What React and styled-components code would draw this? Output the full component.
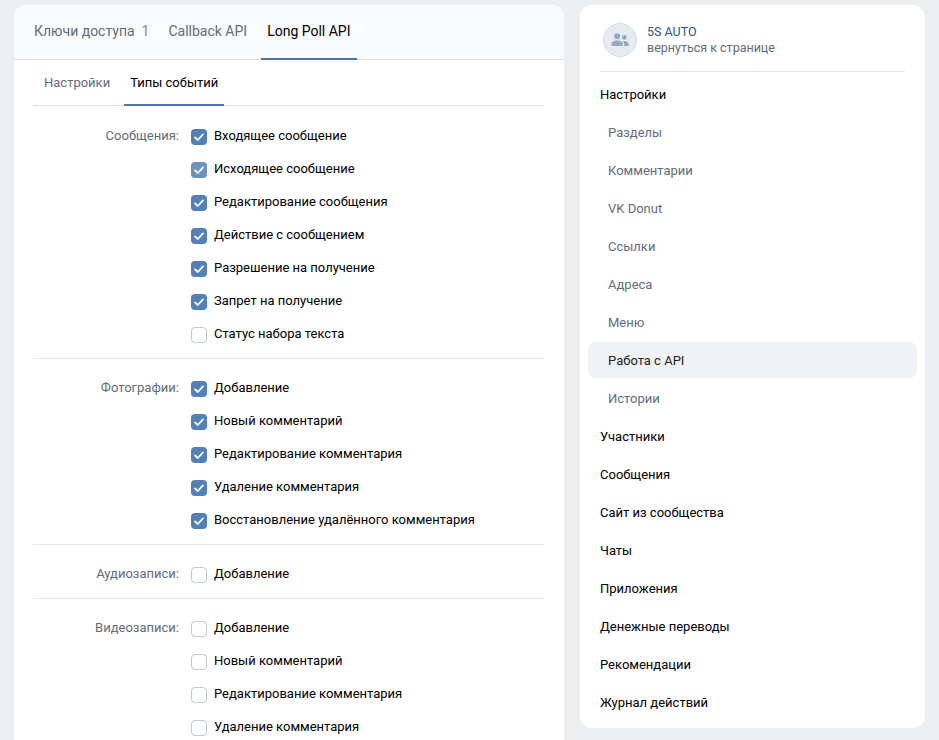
import styled, { createGlobalStyle } from "styled-components";

const GlobalStyle = createGlobalStyle`
  html, body {
    margin: 0;
    height: 740px;
    overflow: hidden;
    background-color: #edeef0;
    font-family: Roboto, "Liberation Sans", sans-serif;
    font-size: 13px;
    color: #000;
  }
`;

const Page = styled.div`
  display: flex;
  align-items: flex-start;
  gap: 16px;
  padding: 5px 14px 0;
`;

const MainCard = styled.main`
  width: 550px;
  background-color: #fff;
  border-radius: 12px 12px 0 0;
  overflow: hidden;
`;

const TopTabs = styled.div`
  display: flex;
  height: 54px;
  padding-left: 14px;
  background-color: #fafbfc;
  border-bottom: 1px solid #dce1e6;
`;

const TopTab = styled.div`
  height: 55px;
  box-sizing: border-box;
  padding: 0 6px 2px;
  margin-right: ${(p) => p.$gap || 0}px;
  display: flex;
  align-items: center;
  font-size: 14px;
  color: ${(p) => (p.$active ? "#000" : "#626d7a")};
  border-bottom: 2px solid ${(p) => (p.$active ? "#4a76a8" : "transparent")};

  span {
    margin-left: 7px;
    color: #828a99;
  }
`;

const Content = styled.div`
  padding: 0 20px 0 19px;
`;

const SubTabs = styled.div`
  display: flex;
  height: 45px;
  padding-left: 4px;
  border-bottom: 1px solid #dce1e6;
`;

const SubTab = styled.div`
  height: 46px;
  box-sizing: border-box;
  padding: 0 ${(p) => (p.$active ? 6 : 7)}px;
  display: flex;
  align-items: center;
  margin-right: ${(p) => p.$gap || 0}px;
  color: ${(p) => (p.$active ? "#000" : "#626d7a")};
  border-bottom: 2px solid ${(p) => (p.$active ? "#4a76a8" : "transparent")};
`;

const Group = styled.section`
  display: grid;
  grid-template-columns: 146px 1fr;
  column-gap: 12px;
  padding: 12px 0 8px;
  border-bottom: 1px solid #e7e8ec;

  &:nth-child(2) {
    padding-top: 13px;
  }

  &:last-child {
    border-bottom: 0;
  }
`;

const GroupLabel = styled.div`
  height: 33px;
  line-height: 33px;
  text-align: right;
  color: #626d7a;
`;

const Rows = styled.div`
  display: flex;
  flex-direction: column;
`;

const Row = styled.label`
  height: 33px;
  display: flex;
  align-items: center;
  gap: 7px;
`;

const Box = styled.span`
  width: 16px;
  height: 16px;
  box-sizing: border-box;
  border-radius: 4px;
  display: flex;
  align-items: center;
  justify-content: center;
  margin-top: 2px;
  background-color: ${(p) => (p.$checked ? (p.$light ? "#6a91bf" : "#5181b8") : "#fff")};
  border: ${(p) => (p.$checked ? "0" : "1.5px solid #c1c9d1")};
`;

const Sidebar = styled.aside`
  width: 345px;
  box-sizing: border-box;
  height: 723px;
  background-color: #fff;
  border-radius: 12px;
  padding: 0 8px;
`;

const GroupHead = styled.div`
  margin: 0 12px;
  height: 67px;
  box-sizing: border-box;
  padding: 18px 0 0 3px;
  display: flex;
  gap: 10px;
  border-bottom: 1px solid #e7e8ec;
`;

const Avatar = styled.div`
  width: 34px;
  height: 34px;
  box-sizing: border-box;
  border-radius: 50%;
  background-color: #e5ebf1;
  border: 1px solid #d7dde4;
  display: flex;
  align-items: center;
  justify-content: center;
  flex-shrink: 0;
`;

const GroupText = styled.div`
  padding-top: 1px;
  line-height: 16px;
  font-size: 12.5px;
`;

const GroupName = styled.div`
  color: #2a5885;
`;

const GroupBack = styled.div`
  color: #626d7a;
`;

const Nav = styled.nav`
  display: flex;
  flex-direction: column;
  gap: 2px;
  padding-top: 4px;
`;

const NavItem = styled.div`
  height: 36px;
  line-height: 38px;
  border-radius: 8px;
  padding-left: ${(p) => (p.$sub ? 20 : 12)}px;
  color: ${(p) => (p.$active ? "#222" : p.$sub ? "#626d7a" : "#000")};
  background-color: ${(p) => (p.$active ? "#f0f2f5" : "transparent")};
`;

const Check = () => (
  <svg width="12" height="12" viewBox="0 0 12 12" fill="none">
    <path d="M2 6.4 4.8 9 10 3.4" stroke="#fff" strokeWidth="1.8" strokeLinecap="round" strokeLinejoin="round" />
  </svg>
);

const UsersIcon = () => (
  <svg width="18" height="14" viewBox="0 0 18 14" fill="#99a9bc">
    <circle cx="6.2" cy="3.2" r="3" />
    <circle cx="13.4" cy="4.4" r="2.3" />
    <path d="M0.5 11.2C0.5 8.6 3.4 7.4 6.2 7.4s5.7 1.2 5.7 3.8v1.2c0 .4-.3.6-.6.6H1.1c-.3 0-.6-.2-.6-.6z" />
    <path d="M13 13h4c.4 0 .6-.2.6-.6v-1.2c0-2.1-2-3.2-4.2-3.2-.6 0-1.1.1-1.6.2 .8.8 1.3 1.8 1.3 3z" />
  </svg>
);

const groups = [
  {
    label: "Сообщения:",
    rows: [
      ["Входящее сообщение", true],
      ["Исходящее сообщение", true, true],
      ["Редактирование сообщения", true],
      ["Действие с сообщением", true],
      ["Разрешение на получение", true],
      ["Запрет на получение", true],
      ["Статус набора текста", false],
    ],
  },
  {
    label: "Фотографии:",
    rows: [
      ["Добавление", true],
      ["Новый комментарий", true],
      ["Редактирование комментария", true],
      ["Удаление комментария", true],
      ["Восстановление удалённого комментария", true],
    ],
  },
  { label: "Аудиозаписи:", rows: [["Добавление", false]] },
  {
    label: "Видеозаписи:",
    rows: [
      ["Добавление", false],
      ["Новый комментарий", false],
      ["Редактирование комментария", false],
      ["Удаление комментария", false],
    ],
  },
];

const subItems = ["Разделы", "Комментарии", "VK Donut", "Ссылки", "Адреса", "Меню", "Работа с API", "Истории"];
const mainItems = ["Участники", "Сообщения", "Сайт из сообщества", "Чаты", "Приложения", "Денежные переводы", "Рекомендации", "Журнал действий"];

export default function App() {
  return (
    <Page>
      <GlobalStyle />
      <MainCard>
        <TopTabs>
          <TopTab $gap={7}>
            Ключи доступа<span>1</span>
          </TopTab>
          <TopTab $gap={8}>Callback API</TopTab>
          <TopTab $active>Long Poll API</TopTab>
        </TopTabs>
        <Content>
          <SubTabs>
            <SubTab $gap={7}>Настройки</SubTab>
            <SubTab $active>Типы событий</SubTab>
          </SubTabs>
          {groups.map((group) => (
            <Group key={group.label}>
              <GroupLabel>{group.label}</GroupLabel>
              <Rows>
                {group.rows.map(([text, checked, light]) => (
                  <Row key={text}>
                    <Box $checked={checked} $light={light}>
                      {checked && <Check />}
                    </Box>
                    {text}
                  </Row>
                ))}
              </Rows>
            </Group>
          ))}
        </Content>
      </MainCard>
      <Sidebar>
        <GroupHead>
          <Avatar>
            <UsersIcon />
          </Avatar>
          <GroupText>
            <GroupName>5S AUTO</GroupName>
            <GroupBack>вернуться к странице</GroupBack>
          </GroupText>
        </GroupHead>
        <Nav>
          <NavItem>Настройки</NavItem>
          {subItems.map((item) => (
            <NavItem key={item} $sub $active={item === "Работа с API"}>
              {item}
            </NavItem>
          ))}
          {mainItems.map((item) => (
            <NavItem key={item}>{item}</NavItem>
          ))}
        </Nav>
      </Sidebar>
    </Page>
  );
}
